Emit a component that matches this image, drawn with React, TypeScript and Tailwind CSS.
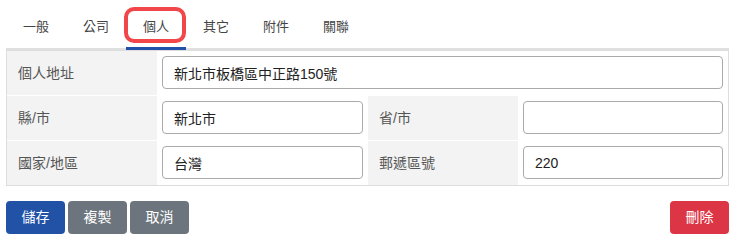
const tabs = ["一般", "公司", "個人", "其它", "附件", "關聯"];

const font = { fontFamily: '"Liberation Sans", "Noto Sans CJK TC", sans-serif' };

function Label({ text }: { text: string }) {
  return (
    <div className="flex items-center bg-[#f3f3f3] pl-[11px] text-[14px] text-[#555]">{text}</div>
  );
}

function Field({ value, span }: { value: string; span?: boolean }) {
  return (
    <div className={span ? "col-span-3 pt-[5px] pl-[5px] pr-[5px]" : "pt-[5px] px-[5px]"}>
      <input
        readOnly
        value={value}
        className="h-[33px] w-full rounded-[4px] border border-[#aaa] bg-white px-[11px] text-[14px] text-[#222] outline-none"
        style={font}
      />
    </div>
  );
}

export default function App() {
  return (
    <div className="h-[244px] w-[735px] bg-white px-[6px]" style={font}>
      {/* 分頁列 */}
      <div className="flex h-[50px] border-b-2 border-[#e0e0e0]">
        {tabs.map((t) => (
          <div
            key={t}
            className={
              t === "個人"
                ? "relative -mb-[2px] flex w-[60px] items-center justify-center border-b-[3px] border-[#2150a8] pt-[6px] text-[13px] text-[#444]"
                : "flex w-[60px] items-center justify-center pt-[5px] text-[13px] text-[#444]"
            }
          >
            {t}
            {t === "個人" && (
              <span className="absolute left-[-2px] right-0 top-[7px] h-[36px] rounded-[10px] border-[4px] border-[#f2474a]" />
            )}
          </div>
        ))}
      </div>

      {/* 個人資料表 */}
      <div className="grid grid-cols-[150px_211px_150px_1fr] auto-rows-[44px] gap-y-[1px] border border-[#ddd]">
        <Label text="個人地址" />
        <Field value="新北市板橋區中正路150號" span />
        <Label text="縣/市" />
        <Field value="新北市" />
        <Label text="省/市" />
        <Field value="" />
        <Label text="國家/地區" />
        <Field value="台灣" />
        <Label text="郵遞區號" />
        <Field value="220" />
      </div>

      {/* 按鈕 */}
      <div className="mt-[15px] flex items-center justify-between">
        <div className="flex gap-[3px]">
          <button className="h-[33px] w-[59px] rounded-[4px] bg-[#2152a6] text-[14px] text-white">儲存</button>
          <button className="h-[33px] w-[59px] rounded-[4px] bg-[#6c757d] text-[14px] text-white">複製</button>
          <button className="h-[33px] w-[59px] rounded-[4px] bg-[#6c757d] text-[14px] text-white">取消</button>
        </div>
        <button className="h-[33px] w-[59px] rounded-[4px] bg-[#dc3545] text-[14px] text-white">刪除</button>
      </div>
    </div>
  );
}
